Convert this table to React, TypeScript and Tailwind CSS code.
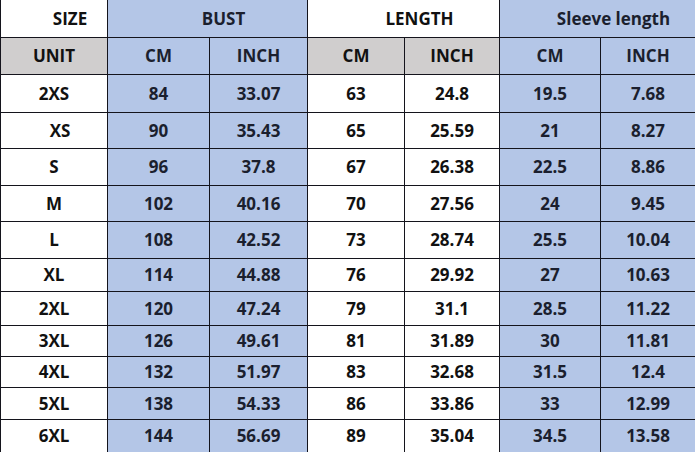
import React from "react";

const rows: string[][] = [
  ["2XS", "84", "33.07", "63", "24.8", "19.5", "7.68"],
  ["XS", "90", "35.43", "65", "25.59", "21", "8.27"],
  ["S", "96", "37.8", "67", "26.38", "22.5", "8.86"],
  ["M", "102", "40.16", "70", "27.56", "24", "9.45"],
  ["L", "108", "42.52", "73", "28.74", "25.5", "10.04"],
  ["XL", "114", "44.88", "76", "29.92", "27", "10.63"],
  ["2XL", "120", "47.24", "79", "31.1", "28.5", "11.22"],
  ["3XL", "126", "49.61", "81", "31.89", "30", "11.81"],
  ["4XL", "132", "51.97", "83", "32.68", "31.5", "12.4"],
  ["5XL", "138", "54.33", "86", "33.86", "33", "12.99"],
  ["6XL", "144", "56.69", "89", "35.04", "34.5", "13.58"],
];

const blueCols = [1, 2, 5, 6];

export default function App() {
  const base =
    "flex items-center justify-center border-l border-t border-[#14141c] text-[17px] font-bold";
  return (
    <div
      className="w-[695px] h-[452px] bg-white overflow-hidden"
      style={{ fontFamily: '"Open Sans", "DejaVu Sans", sans-serif' }}
    >
      <div className="grid grid-cols-[107px_102px_98px_97px_95px_101px_95px] grid-rows-[37px_37px_38px_36px_37px_36px_37px_33px_34px_31px_31px_32px_33px] h-[452px] border-b border-[#14141c]">
        {/* header row */}
        <div className="flex items-center justify-center pl-8 border-l border-[#14141c] bg-white text-[#111] text-[17px] font-bold">
          SIZE
        </div>
        <div className="col-span-2 flex items-center justify-center pl-8 border-l border-[#14141c] bg-[#b4c6e7] text-[#1b1f2e] text-[17px] font-bold">
          BUST
        </div>
        <div className="col-span-2 flex items-center justify-center pl-8 border-l border-[#14141c] bg-white text-[#111] text-[17px] font-bold">
          LENGTH
        </div>
        <div className="col-span-2 flex items-center justify-center pl-8 border-l border-[#14141c] bg-[#b4c6e7] text-[#1b1f2e] text-[17px] font-bold">
          Sleeve length
        </div>
        {/* unit row */}
        <div className={`${base} bg-[#d0cece] text-[#111]`}>UNIT</div>
        <div className={`${base} bg-[#b4c6e7] text-[#1b1f2e]`}>CM</div>
        <div className={`${base} bg-[#b4c6e7] text-[#1b1f2e]`}>INCH</div>
        <div className={`${base} bg-[#d0cece] text-[#111]`}>CM</div>
        <div className={`${base} bg-[#d0cece] text-[#111]`}>INCH</div>
        <div className={`${base} bg-[#b4c6e7] text-[#1b1f2e]`}>CM</div>
        <div className={`${base} bg-[#b4c6e7] text-[#1b1f2e]`}>INCH</div>
        {rows.map((r, i) =>
          r.map((c, j) => (
            <div
              key={`${i}-${j}`}
              className={`${base} ${
                blueCols.includes(j)
                  ? "bg-[#b4c6e7] text-[#1b1f2e]"
                  : "bg-white text-[#111]"
              } ${j === 0 && c === "XS" ? "pl-3" : ""}`}
            >
              {c}
            </div>
          ))
        )}
      </div>
    </div>
  );
}
